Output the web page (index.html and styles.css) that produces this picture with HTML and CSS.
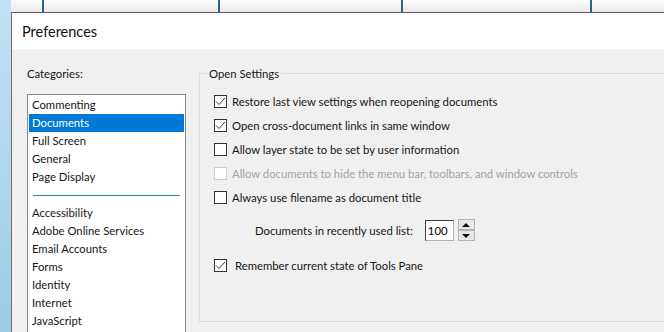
FILE: index.html
```html
<!DOCTYPE html>
<html lang="en">

<head>
    <meta charset="UTF-8">
    <meta name="viewport" content="width=device-width, initial-scale=1.0">
    <title>Preferences</title>
    <link rel="stylesheet" href="styles.css">
</head>

<body>
    <div class="desktop-edge"></div>
    <div class="main">
        <div class="behind">
            <div class="col c1"></div>
            <div class="col c2"></div>
            <div class="col c3"></div>
            <div class="col c4"></div>
            <div class="col c5"></div>
        </div>
        <div class="window">
            <div class="title">Preferences</div>
            <div class="content">
                <div class="categories">
                    <div class="cat-label">Categories:</div>
                    <ul class="list">
                        <li>Commenting</li>
                        <li class="selected">Documents</li>
                        <li>Full Screen</li>
                        <li>General</li>
                        <li>Page Display</li>
                        <li class="sep"></li>
                        <li>Accessibility</li>
                        <li>Adobe Online Services</li>
                        <li>Email Accounts</li>
                        <li>Forms</li>
                        <li>Identity</li>
                        <li>Internet</li>
                        <li>JavaScript</li>
                    </ul>
                </div>

                <fieldset class="group">
                    <legend>Open Settings</legend>

                    <label class="check">
                        <span class="box">
                            <svg width="13" height="13" viewBox="0 0 13 13"><polyline points="2,6.5 5,9.5 11,3" /></svg>
                        </span>
                        Restore last view settings when reopening documents
                    </label>
                    <label class="check">
                        <span class="box">
                            <svg width="13" height="13" viewBox="0 0 13 13"><polyline points="2,6.5 5,9.5 11,3" /></svg>
                        </span>
                        Open cross-document links in same window
                    </label>
                    <label class="check">
                        <span class="box"></span>
                        Allow layer state to be set by user information
                    </label>
                    <label class="check disabled">
                        <span class="box"></span>
                        Allow documents to hide the menu bar, toolbars, and window controls
                    </label>
                    <label class="check">
                        <span class="box"></span>
                        Always use filename as document title
                    </label>

                    <div class="recent">
                        <span class="recent-label">Documents in recently used list:</span>
                        <input type="text" value="100" class="num">
                        <div class="spin">
                            <button class="up"><span class="tri-up"></span></button>
                            <button class="down"><span class="tri-down"></span></button>
                        </div>
                    </div>

                    <label class="check wide">
                        <span class="box">
                            <svg width="13" height="13" viewBox="0 0 13 13"><polyline points="2,6.5 5,9.5 11,3" /></svg>
                        </span>
                        Remember current state of Tools Pane
                    </label>
                </fieldset>
            </div>
        </div>
    </div>
</body>

</html>
```

FILE: styles.css
```css
body {
    margin: 0;
    height: 332px;
    overflow: hidden;
    display: flex;
    font-family: Lato, "Noto Sans", sans-serif;
    font-size: 11.3px;
    color: #161616;
}

.desktop-edge {
    width: 11px;
    flex-shrink: 0;
    background: linear-gradient(#c2e2f4, #9dcbe7);
}

.main {
    flex: 1;
    display: flex;
    flex-direction: column;
    min-width: 0;
}

.behind {
    height: 12px;
    flex-shrink: 0;
    display: flex;
    background: linear-gradient(#fbfbfb, #e9e9e9);
    border-bottom: 1px solid #5e5e5e;
}

.col {
    border-right: 2px solid #2d6485;
}

.c1 { width: 31px; }
.c2 { width: 174px; }
.c3 { width: 181px; }
.c4 { width: 187px; }
.c5 { flex: 1; border-right: 0; }

.window {
    flex: 1;
    min-height: 0;
    display: flex;
    flex-direction: column;
    border-left: 1px solid #6f6f6f;
}

.title {
    height: 36px;
    flex-shrink: 0;
    background: #fff;
    padding-left: 10px;
    font-size: 14.5px;
    line-height: 37px;
    color: #111;
}

.content {
    flex: 1;
    min-height: 0;
    overflow: hidden;
    background: #f0f0f0;
    display: flex;
    padding-left: 15px;
    gap: 13px;
}

.categories {
    width: 159px;
    flex-shrink: 0;
}

.cat-label {
    margin-top: 18px;
    height: 27px;
}

.list {
    list-style: none;
    margin: 0;
    padding: 1px;
    background: #fff;
    border: 1px solid #828790;
    height: 300px;
}

.list li {
    height: 18px;
    line-height: 18px;
    padding-left: 3px;
}

.list li.selected {
    background: #0078d7;
    color: #fff;
}

.list li.sep {
    margin: 0 4px;
    padding: 0;
}

.list li.sep::after {
    content: "";
    display: block;
    height: 1px;
    background: #2a8ab3;
    transform: translateY(9px);
}

.group {
    flex: 1;
    margin: 18px 0 0 0;
    padding: 9px 0 0 14px;
    border: 1px solid #dcdcdc;
    border-right: 0;
    height: 255px;
    box-sizing: border-box;
}

.group legend {
    margin-left: -7px;
    padding: 0 2px;
}

.check {
    display: flex;
    align-items: center;
    height: 24px;
    gap: 5px;
}

.check.wide {
    gap: 8px;
    margin-top: 6px;
}

.box {
    width: 11px;
    height: 11px;
    border: 1px solid #333;
    background: #fff;
    flex-shrink: 0;
    display: flex;
}

.box svg {
    margin: -1px;
}

.box polyline {
    fill: none;
    stroke: #3a3a3a;
    stroke-width: 1;
}

.check.disabled {
    color: #a2a2a2;
}

.check.disabled .box {
    border-color: #cdcdcd;
}

.recent {
    display: flex;
    align-items: center;
    height: 34px;
    margin-top: 4px;
    padding-left: 41px;
}

.recent-label {
    margin-right: 12px;
}

.num {
    width: 29px;
    height: 21px;
    box-sizing: border-box;
    padding: 0 0 0 2px;
    margin: 0;
    font: inherit;
    border: 1px solid #b0b0b0;
    border-top-color: #404040;
    border-left-color: #404040;
    outline: 0;
}

.spin {
    margin-left: 4px;
    display: flex;
    flex-direction: column;
}

.spin button {
    width: 17px;
    height: 11px;
    box-sizing: border-box;
    padding: 0;
    margin: 0;
    border: 1px solid #b4b4b4;
    background: #e8e8e8;
    display: flex;
    align-items: center;
    justify-content: center;
}

.tri-up,
.tri-down {
    display: block;
    width: 0;
    height: 0;
    border-left: 4px solid transparent;
    border-right: 4px solid transparent;
}

.tri-up {
    border-bottom: 4px solid #111;
}

.tri-down {
    border-top: 4px solid #111;
}
```
